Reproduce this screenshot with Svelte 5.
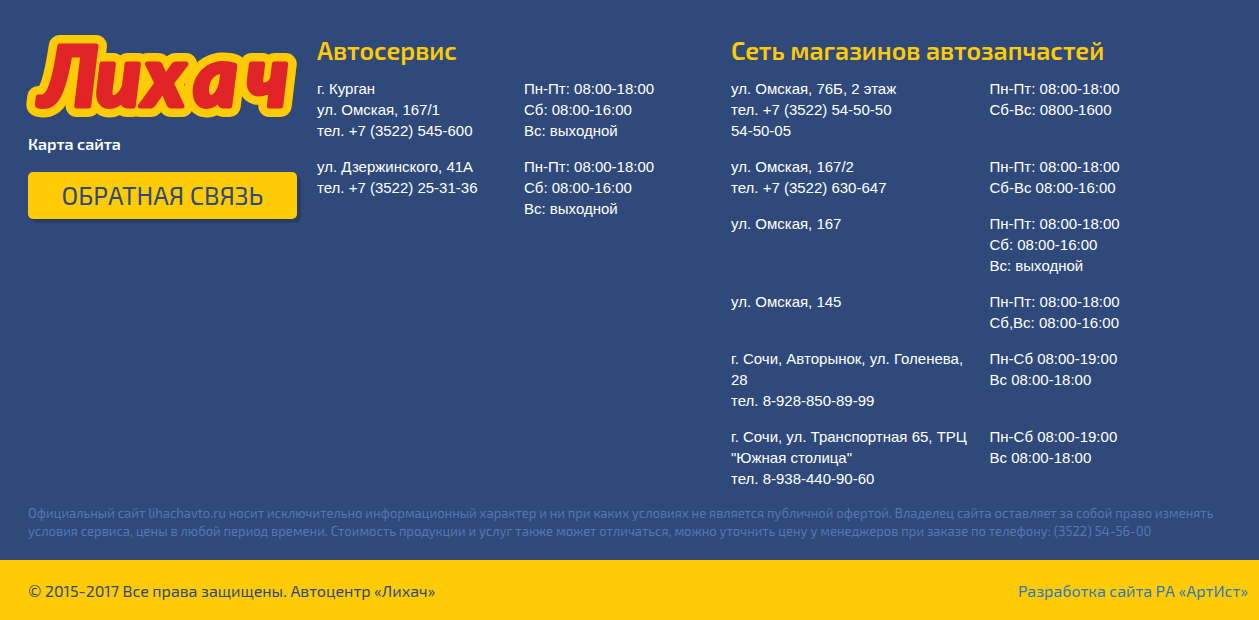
<script>
  const sections = [
    {
      title: 'Автосервис',
      rows: [
        { place: ['г. Курган', 'ул. Омская, 167/1', 'тел. +7 (3522) 545-600'], hours: ['Пн-Пт: 08:00-18:00', 'Сб: 08:00-16:00', 'Вс: выходной'] },
        { place: ['ул. Дзержинского, 41А', 'тел. +7 (3522) 25-31-36'], hours: ['Пн-Пт: 08:00-18:00', 'Сб: 08:00-16:00', 'Вс: выходной'] }
      ]
    },
    {
      title: 'Сеть магазинов автозапчастей',
      rows: [
        { place: ['ул. Омская, 76Б, 2 этаж', 'тел. +7 (3522) 54-50-50', '54-50-05'], hours: ['Пн-Пт: 08:00-18:00', 'Сб-Вс: 0800-1600'] },
        { place: ['ул. Омская, 167/2', 'тел. +7 (3522) 630-647'], hours: ['Пн-Пт: 08:00-18:00', 'Сб-Вс 08:00-16:00'] },
        { place: ['ул. Омская, 167'], hours: ['Пн-Пт: 08:00-18:00', 'Сб: 08:00-16:00', 'Вс: выходной'] },
        { place: ['ул. Омская, 145'], hours: ['Пн-Пт: 08:00-18:00', 'Сб,Вс: 08:00-16:00'] },
        { place: ['г. Сочи, Авторынок, ул. Голенева, 28', 'тел. 8-928-850-89-99'], hours: ['Пн-Сб 08:00-19:00', 'Вс 08:00-18:00'] },
        { place: ['г. Сочи, ул. Транспортная 65, ТРЦ "Южная столица"', 'тел. 8-938-440-90-60'], hours: ['Пн-Сб 08:00-19:00', 'Вс 08:00-18:00'] }
      ]
    }
  ];
</script>

<footer>
  <div class="main">
    <div class="columns">
      <div class="brand">
        <a class="logo" href="/">
          <svg viewBox="0 0 269 86" role="img" aria-label="Лихач">
            <use class="outline" href="#wordmark" />
            <g class="fill">
              <text id="wordmark" x="12 68 116 166 219" y="73">Лихач</text>
            </g>
          </svg>
        </a>
        <a class="sitemap" href="/sitemap">Карта сайта</a>
        <button type="button">ОБРАТНАЯ СВЯЗЬ</button>
      </div>
      {#each sections as s}
        <section>
          <h2>{s.title}</h2>
          <table>
            <tbody>
              {#each s.rows as row}
                <tr>
                  <td>{#each row.place as line}<div>{line}</div>{/each}</td>
                  <td>{#each row.hours as line}<div>{line}</div>{/each}</td>
                </tr>
              {/each}
            </tbody>
          </table>
        </section>
      {/each}
    </div>
    <p class="legal">Официальный сайт lihachavto.ru носит исключительно информационный характер и ни при каких условиях не является публичной офертой. Владелец сайта оставляет за собой право изменять условия сервиса, цены в любой период времени. Стоимость продукции и услуг также может отличаться, можно уточнить цену у менеджеров при заказе по телефону: (3522) 54-56-00</p>
  </div>
  <div class="bottom">
    <span>© 2015-2017 Все права защищены. Автоцентр «Лихач»</span>
    <a href="/artist">Разработка сайта РА «АртИст»</a>
  </div>
</footer>

<style>
  :global(body) { background: #2f4a7a; }
  footer { font-family: 'Exo 2', Roboto, sans-serif; color: #fff; }
  a { text-decoration: none; }
  .main { padding: 33px 11px 20px 28px; background: #2f4a7a; }
  .columns { display: grid; grid-template-columns: 289fr 414fr 517fr; }
  .brand { display: flex; flex-direction: column; align-items: flex-start; padding-right: 20px; }
  .logo { display: block; width: 100%; }
  svg { display: block; width: 100%; overflow: visible; }
  text { font-family: Lato, sans-serif; font-size: 82px; font-weight: 900; font-style: italic; stroke-linejoin: round; }
  .outline { fill: #ffcb05; stroke: #ffcb05; stroke-width: 22px; }
  .fill { fill: #e12427; stroke: #e12427; stroke-width: 5px; }
  .sitemap { margin-top: 14px; font-size: 16px; line-height: 22px; font-weight: 600; color: #fff; }
  button {
    width: 100%; height: 47px; margin-top: 17px; padding: 0 0 2px; border: 0; border-radius: 5px;
    background: #ffcb05; box-shadow: 4px 4px 0 #273d66; color: #2f4a7a;
    font-family: inherit; font-size: 25px; cursor: pointer;
  }
  h2 { margin: 0 0 10px; font-size: 25px; line-height: 35px; font-weight: 600; color: #ffcb05; }
  table { width: 100%; table-layout: fixed; border-collapse: collapse; font-family: 'Liberation Sans', Arial, sans-serif; font-size: 15px; line-height: 21px; }
  td { padding: 0 20px 15px 0; vertical-align: top; }
  .legal { margin: 0; font-size: 13px; line-height: 18px; color: #5577b8; }
  .bottom {
    display: flex; justify-content: space-between; align-items: center; padding: 21px 11px 19px 28px;
    background: #ffcb05; color: #2f4a7a; font-size: 16px; line-height: 20px;
  }
  .bottom a { color: #337ab7; }
</style>
